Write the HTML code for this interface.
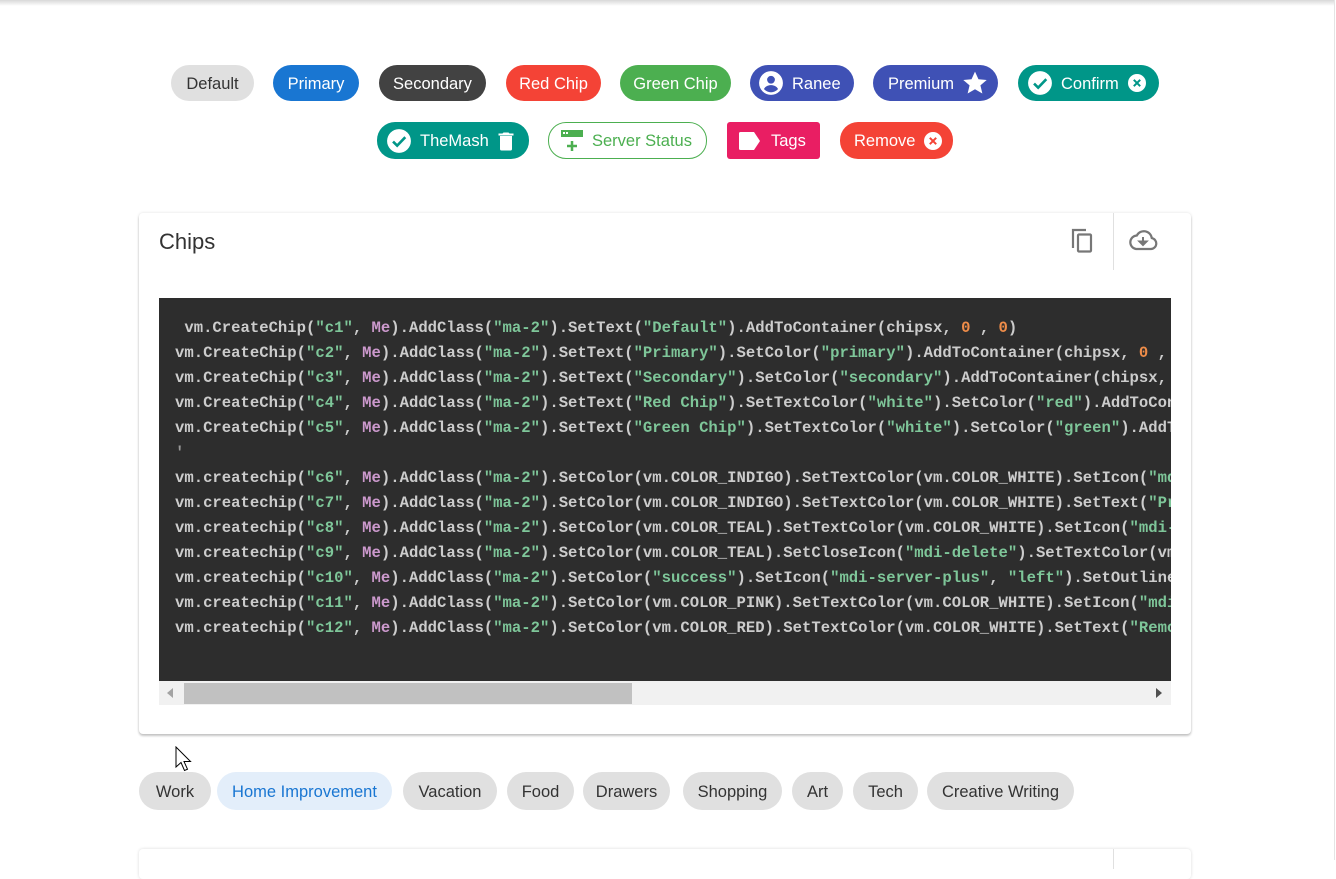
<!DOCTYPE html>
<html><head><meta charset="utf-8">
<style>
*{box-sizing:border-box;margin:0;padding:0}
body{width:1336px;height:860px;overflow:hidden;background:#fff;font-family:"Liberation Sans",sans-serif;position:relative}
.topsh{position:absolute;left:0;top:0;width:1334px;height:6px;background:linear-gradient(#d8d8d8,#fff)}
.vline{position:absolute;left:1334px;top:0;width:1px;height:860px;background:#e4e4e4}
.c{position:absolute;height:36px;border-radius:18px;display:flex;align-items:center;justify-content:center;font-size:16.5px;color:#fff;white-space:nowrap;gap:8px;padding-top:2px}
.c svg{flex:none;margin-top:-2px}
.card{position:absolute;left:139px;top:213px;width:1052px;height:521px;background:#fff;border-radius:4px;box-shadow:0 2px 2px rgba(0,0,0,.2),0 0 3px rgba(0,0,0,.12)}
.title{position:absolute;left:20px;top:16px;font-size:22px;color:#333}
.div{position:absolute;left:974px;top:0;width:1px;height:57px;background:#e0e0e0}
.code{position:absolute;left:20px;top:85px;width:1012px;height:383px;background:#2d2d2d;overflow:hidden;padding:18px 0 0 16px;font-family:"Liberation Mono",monospace;font-size:15.6px;font-weight:bold;color:#ccc;line-height:25px;white-space:pre}
.s{color:#7ec699}.m{color:#cc99cd}.n{color:#f08d49}
.sb{position:absolute;left:20px;top:468px;width:1012px;height:24px;background:#f1f1f1}
.thumb{position:absolute;left:25px;top:2px;width:448px;height:21px;background:#c1c1c1}
.g{position:absolute;top:772px;height:38px;border-radius:19px;background:#e0e0e0;color:#333;font-size:16.5px;display:flex;align-items:center;justify-content:center;padding-top:2px}
.card2{position:absolute;left:139px;top:849px;width:1052px;height:30px;background:#fff;border-radius:4px;box-shadow:0 0 3px rgba(0,0,0,.15)}
</style></head><body>
<div class="topsh"></div><div class="vline"></div>

<div class="c" style="left:171px;top:65px;width:83px;background:#e0e0e0;color:#333">Default</div>
<div class="c" style="left:273px;top:65px;width:86px;background:#1976d2">Primary</div>
<div class="c" style="left:379px;top:65px;width:107px;background:#424242">Secondary</div>
<div class="c" style="left:506px;top:65px;width:95px;background:#f44336">Red Chip</div>
<div class="c" style="left:620px;top:65px;width:111px;background:#4caf50">Green Chip</div>
<div class="c" style="left:750px;top:65px;width:104px;background:#3f51b5;justify-content:flex-start;padding-left:8px"><svg width="26" height="26" viewBox="0 0 24 24"><circle cx="12" cy="12" r="11" fill="#fff"/><circle cx="12" cy="9" r="3.6" fill="#3f51b5"/><path d="M5.5 17.5c1.5-2.5 4-3.5 6.5-3.5s5 1 6.5 3.5c-1.6 1.9-4 3-6.5 3s-4.9-1.1-6.5-3z" fill="#3f51b5"/></svg>Ranee</div>
<div class="c" style="left:873px;top:65px;width:125px;background:#3f51b5;justify-content:flex-start;padding-left:15px">Premium<svg width="26" height="26" viewBox="0 0 24 24"><path d="M12 1.5l3.2 7 7.6.7-5.8 5 1.8 7.5L12 17.8l-6.8 3.9 1.8-7.5-5.8-5 7.6-.7z" fill="#fff"/></svg></div>
<div class="c" style="left:1018px;top:65px;width:141px;background:#009688;justify-content:flex-start;padding-left:9px"><svg width="26" height="26" viewBox="0 0 24 24"><circle cx="12" cy="12" r="11" fill="#fff"/><path d="M6.5 12.5l3.8 3.8 7.5-7.8" stroke="#009688" stroke-width="2.4" fill="none"/></svg>Confirm<svg width="20" height="20" viewBox="0 0 20 20"><circle cx="10" cy="10" r="9" fill="#fff"/><path d="M6.8 6.8l6.4 6.4M13.2 6.8l-6.4 6.4" stroke="#009688" stroke-width="2"/></svg></div>

<div class="c" style="left:377px;top:122px;width:152px;height:37px;background:#009688;justify-content:flex-start;padding-left:9px"><svg width="26" height="26" viewBox="0 0 24 24"><circle cx="12" cy="12" r="11" fill="#fff"/><path d="M6.5 12.5l3.8 3.8 7.5-7.8" stroke="#009688" stroke-width="2.4" fill="none"/></svg>TheMash<svg width="18" height="20" viewBox="0 0 18 20"><path d="M3 5h12v13a1.5 1.5 0 0 1-1.5 1.5h-9A1.5 1.5 0 0 1 3 18z M1.5 2.5h4l1-1h5l1 1h4v2h-15z" fill="#fff"/></svg></div>
<div class="c" style="left:548px;top:122px;width:159px;height:37px;background:#fff;border:1px solid #4caf50;color:#4caf50;justify-content:flex-start;padding-left:11px"><svg width="24" height="24" viewBox="0 0 24 24"><rect x="1" y="1" width="22" height="7" fill="#4caf50"/><rect x="3" y="3" width="2" height="2" fill="#fff"/><rect x="6" y="3" width="2" height="2" fill="#fff"/><path d="M12 12v10M7 17h10" stroke="#4caf50" stroke-width="2.5"/></svg>Server Status</div>
<div class="c" style="left:727px;top:122px;width:93px;height:37px;border-radius:3px;background:#e91e63;justify-content:flex-start;padding-left:10px;gap:10px"><svg width="24" height="20" viewBox="0 0 24 20"><path d="M2 2.5a1.5 1.5 0 0 1 1.5-1.5H17l6 9-6 9H3.5A1.5 1.5 0 0 1 2 17.5z" fill="#fff"/></svg>Tags</div>
<div class="c" style="left:840px;top:122px;width:113px;height:37px;background:#f44336;justify-content:flex-start;padding-left:14px">Remove<svg width="20" height="20" viewBox="0 0 20 20"><circle cx="10" cy="10" r="9" fill="#fff"/><path d="M6.8 6.8l6.4 6.4M13.2 6.8l-6.4 6.4" stroke="#f44336" stroke-width="2"/></svg></div>

<div class="card">
<div class="title">Chips</div>
<svg style="position:absolute;left:931px;top:14px" width="26" height="28" viewBox="0 0 26 28"><path d="M3 21V3h13" stroke="#777" stroke-width="2.2" fill="none"/><rect x="8" y="7.5" width="13" height="17" rx="1" stroke="#777" stroke-width="2.2" fill="none"/></svg>
<div class="div"></div>
<svg style="position:absolute;left:989px;top:16px" width="30" height="22" viewBox="0 0 30 22"><path d="M8 20h15a5.5 5.5 0 0 0 .8-10.9A8 8 0 0 0 8.8 6.5 6.8 6.8 0 0 0 8 20z" stroke="#777" stroke-width="2.2" fill="none"/><path d="M15 8v6M11.5 12.5h7l-3.5 3.5z" stroke="#777" stroke-width="2" fill="#777"/></svg>
<div class="code"> vm.CreateChip(<span class="s">"c1"</span>, <span class="m">Me</span>).AddClass(<span class="s">"ma-2"</span>).SetText(<span class="s">"Default"</span>).AddToContainer(chipsx, <span class="n">0</span> , <span class="n">0</span>)
vm.CreateChip(<span class="s">"c2"</span>, <span class="m">Me</span>).AddClass(<span class="s">"ma-2"</span>).SetText(<span class="s">"Primary"</span>).SetColor(<span class="s">"primary"</span>).AddToContainer(chipsx, <span class="n">0</span> , <span class="n">1</span>)
vm.CreateChip(<span class="s">"c3"</span>, <span class="m">Me</span>).AddClass(<span class="s">"ma-2"</span>).SetText(<span class="s">"Secondary"</span>).SetColor(<span class="s">"secondary"</span>).AddToContainer(chipsx, <span class="n">0</span> , <span class="n">2</span>)
vm.CreateChip(<span class="s">"c4"</span>, <span class="m">Me</span>).AddClass(<span class="s">"ma-2"</span>).SetText(<span class="s">"Red Chip"</span>).SetTextColor(<span class="s">"white"</span>).SetColor(<span class="s">"red"</span>).AddToContainer(chipsx)
vm.CreateChip(<span class="s">"c5"</span>, <span class="m">Me</span>).AddClass(<span class="s">"ma-2"</span>).SetText(<span class="s">"Green Chip"</span>).SetTextColor(<span class="s">"white"</span>).SetColor(<span class="s">"green"</span>).AddToContainer(chipsx)
<span style="color:#999">'</span>
vm.createchip(<span class="s">"c6"</span>, <span class="m">Me</span>).AddClass(<span class="s">"ma-2"</span>).SetColor(vm.COLOR_INDIGO).SetTextColor(vm.COLOR_WHITE).SetIcon(<span class="s">"mdi-account"</span>)
vm.createchip(<span class="s">"c7"</span>, <span class="m">Me</span>).AddClass(<span class="s">"ma-2"</span>).SetColor(vm.COLOR_INDIGO).SetTextColor(vm.COLOR_WHITE).SetText(<span class="s">"Premium"</span>)
vm.createchip(<span class="s">"c8"</span>, <span class="m">Me</span>).AddClass(<span class="s">"ma-2"</span>).SetColor(vm.COLOR_TEAL).SetTextColor(vm.COLOR_WHITE).SetIcon(<span class="s">"mdi-check"</span>)
vm.createchip(<span class="s">"c9"</span>, <span class="m">Me</span>).AddClass(<span class="s">"ma-2"</span>).SetColor(vm.COLOR_TEAL).SetCloseIcon(<span class="s">"mdi-delete"</span>).SetTextColor(vm.COLOR_WHITE)
vm.createchip(<span class="s">"c10"</span>, <span class="m">Me</span>).AddClass(<span class="s">"ma-2"</span>).SetColor(<span class="s">"success"</span>).SetIcon(<span class="s">"mdi-server-plus"</span>, <span class="s">"left"</span>).SetOutlined(True)
vm.createchip(<span class="s">"c11"</span>, <span class="m">Me</span>).AddClass(<span class="s">"ma-2"</span>).SetColor(vm.COLOR_PINK).SetTextColor(vm.COLOR_WHITE).SetIcon(<span class="s">"mdi-label"</span>)
vm.createchip(<span class="s">"c12"</span>, <span class="m">Me</span>).AddClass(<span class="s">"ma-2"</span>).SetColor(vm.COLOR_RED).SetTextColor(vm.COLOR_WHITE).SetText(<span class="s">"Remove"</span>)</div>
<div class="sb"><svg style="position:absolute;left:8px;top:7px" width="6" height="10"><path d="M6 0v10L0 5z" fill="#a3a3a3"/></svg><div class="thumb"></div><svg style="position:absolute;left:997px;top:7px" width="6" height="10"><path d="M0 0v10L6 5z" fill="#505050"/></svg></div>
</div>

<svg style="position:absolute;left:175px;top:746px" width="20" height="28" viewBox="0 0 20 28"><path d="M1 1v20l5-4.5 3.5 8 3-1.3-3.5-7.7h6.5z" fill="#fff" stroke="#000" stroke-width="1"/></svg>

<div class="g" style="left:139px;width:72px">Work</div>
<div class="g" style="left:217px;width:175px;background:#e3eefa;color:#1976d2">Home Improvement</div>
<div class="g" style="left:403px;width:94px">Vacation</div>
<div class="g" style="left:507px;width:67px">Food</div>
<div class="g" style="left:583px;width:87px">Drawers</div>
<div class="g" style="left:683px;width:99px">Shopping</div>
<div class="g" style="left:792px;width:51px">Art</div>
<div class="g" style="left:853px;width:65px">Tech</div>
<div class="g" style="left:927px;width:147px">Creative Writing</div>

<div class="card2"><div style="position:absolute;left:974px;top:0;width:1px;height:20px;background:#e0e0e0"></div></div>
</body></html>
